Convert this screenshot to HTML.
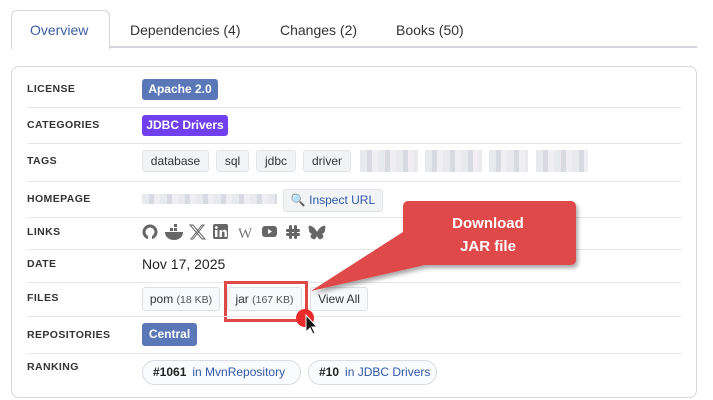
<!DOCTYPE html>
<html><head><style>
body{margin:0;width:713px;height:400px;background:#fff;font-family:"Liberation Sans",sans-serif;position:relative;overflow:hidden;color:#222}
.a{position:absolute}
.tab{position:absolute;top:10px;height:37px;line-height:40px;font-size:14px;color:#333}
.lbl{position:absolute;left:27px;font-size:10.5px;font-weight:bold;color:#333;letter-spacing:.4px}
.sep{position:absolute;left:27px;width:654px;height:1px;background:#e6e6e6}
.b{position:absolute;height:21px;line-height:21px;font-size:12px;border-radius:3px;text-align:center;box-sizing:border-box}
.t{background:#f2f3f5;border:1px solid #e2e4e8;color:#333;height:22px;line-height:20px}
.f{background:#f8f9fb;border:1px solid #dde0e5;color:#333;height:24px;line-height:22px}
.f small{font-size:10.5px;color:#555}
.blur{position:absolute;background:repeating-linear-gradient(90deg,#e3e4ea 0 7px,#cfd1da 7px 12px,#eceaf0 12px 18px)}
.pill{position:absolute;top:360px;height:25px;line-height:23px;border:1px solid #d9dce2;border-radius:13px;font-size:12px;box-sizing:border-box;padding-left:10px;background:#fafbfc}
.pill b{color:#222}.pill span{color:#2f58a8;margin-left:6px}
</style></head><body>
<div class="a" style="left:11px;top:10px;width:97px;height:38px;border:1px solid #d4d6dc;border-bottom:none;border-radius:6px 6px 0 0;background:#fff;z-index:2"></div>
<div class="a" style="left:11px;top:46px;width:686px;height:2px;background:#d4d6dc"></div>
<div class="tab" style="left:30px;color:#3d5ea5;z-index:3">Overview</div>
<div class="tab" style="left:130px">Dependencies (4)</div>
<div class="tab" style="left:280px">Changes (2)</div>
<div class="tab" style="left:396px">Books (50)</div>
<div class="a" style="left:11px;top:66px;width:684px;height:330px;border:1px solid #d4d6dc;border-radius:8px"></div>

<div class="lbl" style="top:83px">LICENSE</div>
<div class="b" style="left:142px;top:79px;width:76px;background:#5a78b8;color:#fff;font-weight:bold">Apache 2.0</div>
<div class="sep" style="top:107px"></div>
<div class="lbl" style="top:119px">CATEGORIES</div>
<div class="b" style="left:142px;top:115px;width:86px;background:#6f3ff0;color:#fff;font-weight:bold">JDBC Drivers</div>
<div class="sep" style="top:143px"></div>
<div class="lbl" style="top:155px">TAGS</div>
<div class="b t" style="left:142px;top:150px;width:67px">database</div>
<div class="b t" style="left:216px;top:150px;width:33px">sql</div>
<div class="b t" style="left:256px;top:150px;width:40px">jdbc</div>
<div class="b t" style="left:303px;top:150px;width:48px">driver</div>
<div class="blur" style="left:360px;top:150px;width:58px;height:22px;opacity:.8"></div>
<div class="blur" style="left:425px;top:150px;width:57px;height:22px;opacity:.8"></div>
<div class="blur" style="left:489px;top:150px;width:39px;height:22px;opacity:.8"></div>
<div class="blur" style="left:536px;top:150px;width:52px;height:22px;opacity:.8"></div>
<div class="sep" style="top:181px"></div>
<div class="lbl" style="top:193px">HOMEPAGE</div>
<div class="blur" style="left:142px;top:194px;width:135px;height:10px;opacity:.8"></div>
<div class="b t" style="left:283px;top:189px;width:100px;height:23px;line-height:21px;color:#2f58a8">🔍 Inspect URL</div>
<div class="sep" style="top:217px"></div>
<div class="lbl" style="top:226px">LINKS</div>
<svg class="a" style="left:140px;top:223px" width="190" height="18" viewBox="0 0 190 18" fill="#666">
<circle cx="10" cy="9" r="7.5"/><circle cx="10" cy="9" r="4.5" fill="#fff"/><rect x="8" y="12" width="4" height="6" fill="#fff"/>
<path d="M25 9h18c0 5-4 8-9 8s-9-3-9-8z"/><rect x="30" y="5" width="3" height="3"/><rect x="34" y="5" width="3" height="3"/><rect x="34" y="1" width="3" height="3"/>
<path d="M50 2h3l12 14h-3zM62 2h2l-11 14h-2z" stroke="#666" stroke-width="1" fill="none"/>
<rect x="73" y="1" width="15" height="15" rx="2"/><rect x="75" y="7" width="2.5" height="7" fill="#fff"/><circle cx="76.3" cy="4.5" r="1.4" fill="#fff"/><path d="M79.5 7h2.3v1.2c.6-1 1.6-1.5 2.6-1.5 2 0 2.5 1.3 2.5 3V14h-2.4v-4c0-1-.3-1.5-1.2-1.5s-1.4.6-1.4 1.6V14h-2.4z" fill="#fff"/>
<text x="98" y="15" font-family="Liberation Serif" font-size="15" fill="#777">W</text>
<rect x="122" y="3" width="15" height="11" rx="3"/><path d="M128 6l4 2.5-4 2.5z" fill="#fff"/>
<g><rect x="146" y="6" width="14" height="3" rx="1.5"/><rect x="146" y="10" width="14" height="3" rx="1.5"/><rect x="149" y="2" width="3" height="14" rx="1.5"/><rect x="154" y="2" width="3" height="14" rx="1.5"/></g>
<path d="M171 3c3 1 5 4 6 6 1-2 3-5 6-6 2-1 3 0 2 4 0 2-1 3-3 4 2 1 2 4-1 5-2 1-3-1-4-3-1 2-2 4-4 3-3-1-3-4-1-5-2-1-3-2-3-4-1-4 0-5 2-4z"/>
</svg>
<div class="sep" style="top:249px"></div>
<div class="lbl" style="top:258px">DATE</div>
<div class="a" style="left:142px;top:256px;font-size:14px">Nov 17, 2025</div>
<div class="sep" style="top:282px"></div>
<div class="lbl" style="top:292px">FILES</div>
<div class="b f" style="left:142px;top:287px;width:78px">pom <small>(18 KB)</small></div>
<div class="b f" style="left:227px;top:287px;width:75px">jar <small>(167 KB)</small></div>
<div class="b f" style="left:310px;top:287px;width:58px">View All</div>
<div class="a" style="left:224px;top:281px;width:78px;height:35px;border:3px solid #e04848"></div>
<div class="sep" style="top:316px"></div>
<div class="lbl" style="top:329px">REPOSITORIES</div>
<div class="b" style="left:142px;top:323px;width:55px;height:23px;line-height:23px;background:#5a78b8;color:#fff;font-weight:bold">Central</div>
<div class="sep" style="top:353px"></div>
<div class="lbl" style="top:361px">RANKING</div>
<div class="pill" style="left:142px;width:159px"><b>#1061</b><span>in MvnRepository</span></div>
<div class="pill" style="left:308px;width:129px"><b>#10</b><span>in JDBC Drivers</span></div>

<svg class="a" style="left:0;top:0" width="713" height="400">
<defs><filter id="s"><feDropShadow dx="2" dy="3" stdDeviation="2" flood-opacity=".35"/></filter></defs>
<g filter="url(#s)"><path d="M408 201h163a5 5 0 0 1 5 5v54a5 5 0 0 1-5 5H425L311 291 403 232v-26a5 5 0 0 1 5-5z" fill="#e04848"/></g>
<text x="488" y="228" text-anchor="middle" fill="#fff" font-size="15" font-weight="bold">Download</text>
<text x="488" y="251" text-anchor="middle" fill="#fff" font-size="15" font-weight="bold">JAR file</text>
<circle cx="305" cy="318" r="9" fill="#e82a2a"/>
<path d="M306 315v17l4-4 3 6 2-1-3-6h5z" fill="#111" stroke="#fff" stroke-width="1"/>
</svg>
</body></html>
